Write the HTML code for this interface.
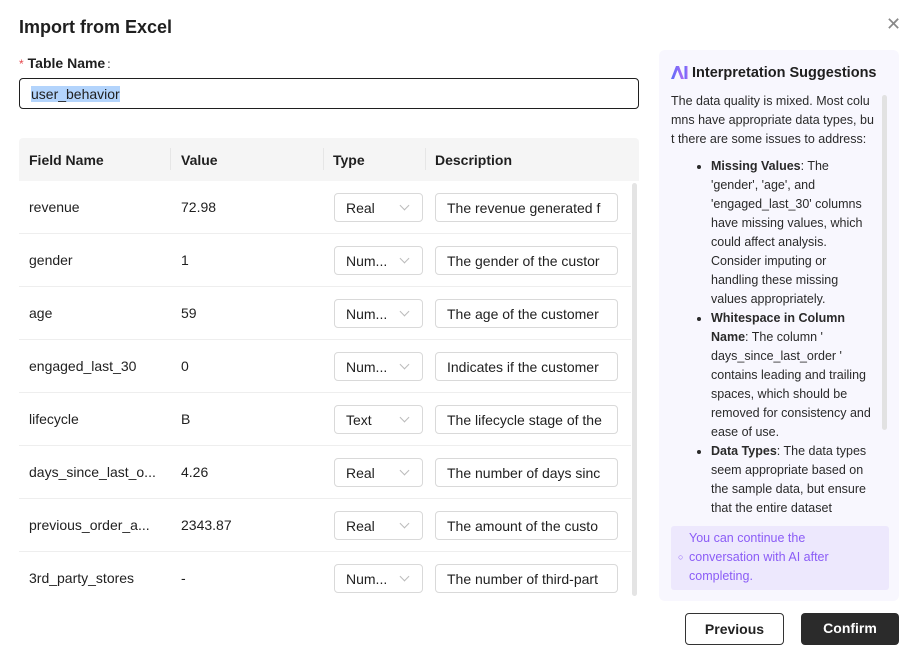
<!DOCTYPE html>
<html><head><meta charset="utf-8"><style>
*{box-sizing:border-box;margin:0;padding:0}
body{width:910px;height:653px;background:#fff;font-family:"Liberation Sans",sans-serif;color:#1f1f1f;position:relative;overflow:hidden}
.abs{position:absolute}
h1{position:absolute;left:19px;top:17px;font-size:18px;font-weight:bold;color:#1f1f1f}
.close{position:absolute;left:886px;top:14px;font-size:18px;color:#888}
.lbl{left:19px;top:55px;font-size:14px;font-weight:bold}
.lbl span{color:#e5484d;font-weight:normal;margin-right:4px;font-size:12px}
.inp{left:19px;top:78px;width:620px;height:31px;border:1px solid #1f1f1f;border-radius:4px;font-size:14px;padding:7px 11px}
.inp span{background:#b3d4fc}
.thead{left:19px;top:138px;width:620px;height:43px;background:#f5f5f5;border-radius:4px 4px 0 0}
.th{position:absolute;top:14px;font-size:14px;font-weight:bold}
.sep{position:absolute;top:10px;width:1px;height:22px;background:#e6e6e6}
.row{position:absolute;left:19px;width:612px;height:53px;border-bottom:1px solid #eee;font-size:14px}
.row .c{position:absolute;top:18px}
.sel{position:absolute;left:315px;top:12px;width:89px;height:29px;border:1px solid #d9d9d9;border-radius:4px;padding:6px 11px}
.sel:after{content:"";position:absolute;right:14px;top:8px;width:6px;height:6px;border-right:1px solid #bbb;border-bottom:1px solid #bbb;transform:rotate(45deg)}
.desc{position:absolute;left:416px;top:12px;width:183px;height:29px;border:1px solid #d9d9d9;border-radius:4px;padding:6px 11px;white-space:nowrap;overflow:hidden}
.sb{left:632px;top:183px;width:5px;height:413px;background:#e4e4e4;border-radius:3px}
.panel{left:659px;top:50px;width:240px;height:551px;background:#f8f7fe;border-radius:6px}
.pt{left:671px;top:65px;font-size:14.5px;font-weight:bold}
.ptext{left:671px;top:92px;width:206px;font-size:12.5px;line-height:19px;color:#2a2a2a;height:425px;overflow:hidden}
.ptext ul{padding-left:40px;margin-top:8px;width:200px}
.psb{left:882px;top:95px;width:5px;height:335px;background:#e2e2e2;border-radius:3px}
.note{left:671px;top:526px;width:218px;height:64px;background:#ede8fd;border-radius:3px;color:#8b5cf6;font-size:12.5px;line-height:19px;padding:3px 0 0 18px}
.btn{top:613px;height:32px;border-radius:4px;font-size:14px;font-weight:bold;text-align:center;line-height:30px}
</style></head><body>
<h1>Import from Excel</h1>
<div class="close">✕</div>
<div class="abs lbl"><span>*</span>Table Name<span style="color:#1f1f1f;margin-left:2px">:</span></div>
<div class="abs inp"><span>user_behavior</span></div>
<div class="abs thead">
<div class="th" style="left:10px">Field Name</div>
<div class="sep" style="left:151px"></div>
<div class="th" style="left:162px">Value</div>
<div class="sep" style="left:304px"></div>
<div class="th" style="left:314px">Type</div>
<div class="sep" style="left:406px"></div>
<div class="th" style="left:416px">Description</div>
</div>
<div class="row" style="top:181px"><div class="c" style="left:10px">revenue</div><div class="c" style="left:162px">72.98</div><div class="sel">Real</div><div class="desc">The revenue generated f</div></div>
<div class="row" style="top:234px"><div class="c" style="left:10px">gender</div><div class="c" style="left:162px">1</div><div class="sel">Num...</div><div class="desc">The gender of the custor</div></div>
<div class="row" style="top:287px"><div class="c" style="left:10px">age</div><div class="c" style="left:162px">59</div><div class="sel">Num...</div><div class="desc">The age of the customer</div></div>
<div class="row" style="top:340px"><div class="c" style="left:10px">engaged_last_30</div><div class="c" style="left:162px">0</div><div class="sel">Num...</div><div class="desc">Indicates if the customer</div></div>
<div class="row" style="top:393px"><div class="c" style="left:10px">lifecycle</div><div class="c" style="left:162px">B</div><div class="sel">Text</div><div class="desc">The lifecycle stage of the</div></div>
<div class="row" style="top:446px"><div class="c" style="left:10px">days_since_last_o...</div><div class="c" style="left:162px">4.26</div><div class="sel">Real</div><div class="desc">The number of days sinc</div></div>
<div class="row" style="top:499px"><div class="c" style="left:10px">previous_order_a...</div><div class="c" style="left:162px">2343.87</div><div class="sel">Real</div><div class="desc">The amount of the custo</div></div>
<div class="row" style="top:552px;border:none"><div class="c" style="left:10px">3rd_party_stores</div><div class="c" style="left:162px">-</div><div class="sel">Num...</div><div class="desc">The number of third-part</div></div>
<div class="abs sb"></div>
<div class="abs panel"></div>
<svg class="abs" style="left:671px;top:66px" width="17" height="13" viewBox="0 0 17 13"><defs><linearGradient id="g" x1="0" x2="1"><stop offset="0" stop-color="#5b6cf9"/><stop offset="1" stop-color="#b06cf5"/></linearGradient></defs><path d="M0 13L5 0H8L13 13H10L6.5 4L3 13Z" fill="url(#g)"/><rect x="13.5" y="0" width="3" height="13" fill="url(#g)"/></svg>
<div class="abs pt" style="left:692px">Interpretation Suggestions</div>
<div class="abs ptext">The data quality is mixed. Most colu mns have appropriate data types, bu t there are some issues to address:
<ul><li><b>Missing Values</b>: The 'gender', 'age', and 'engaged_last_30' columns have missing values, which could affect analysis. Consider imputing or handling these missing values appropriately.</li>
<li><b>Whitespace in Column Name</b>: The column ' days_since_last_order ' contains leading and trailing spaces, which should be removed for consistency and ease of use.</li>
<li><b>Data Types</b>: The data types seem appropriate based on the sample data, but ensure that the entire dataset</li></ul></div>
<div class="abs psb"></div>
<div class="abs note"><span class="abs" style="left:7px;top:22px;font-size:9px">○</span>You can continue the<br>conversation with AI after<br>completing.</div>
<div class="abs btn" style="left:685px;width:99px;border:1px solid #333;color:#222">Previous</div>
<div class="abs btn" style="left:801px;width:98px;background:#2b2b2b;color:#fff">Confirm</div>
</body></html>
